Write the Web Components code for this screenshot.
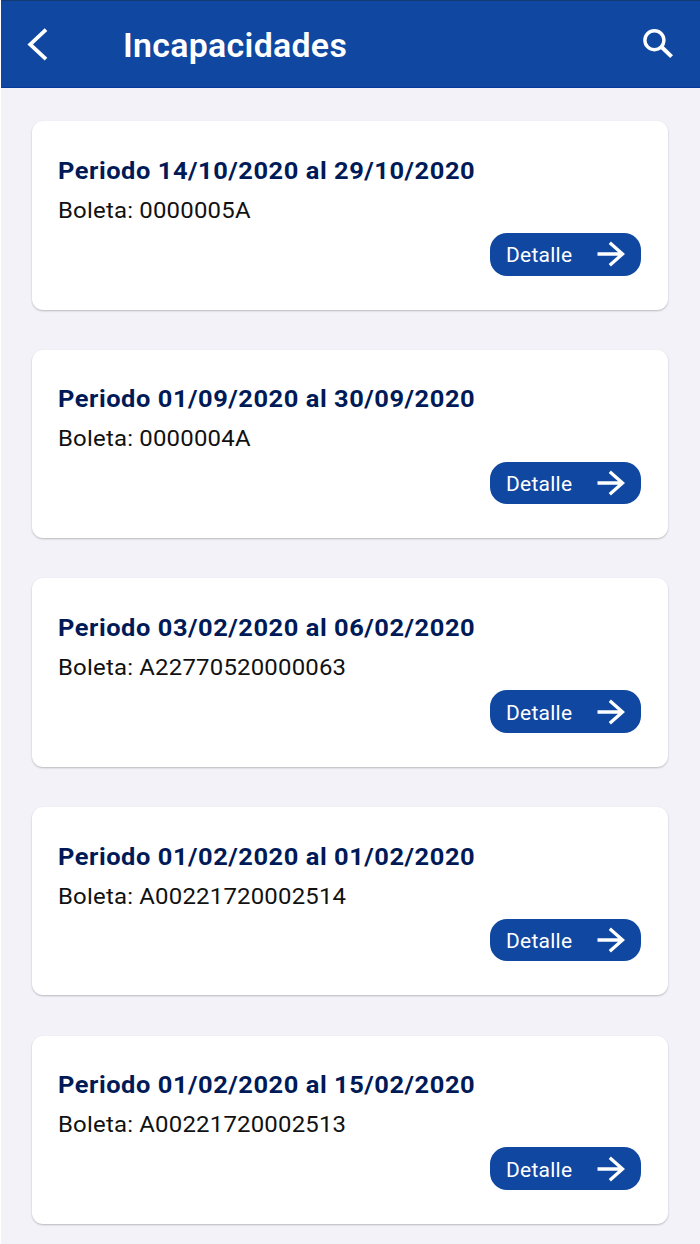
<!DOCTYPE html>
<html lang="es">
<head>
    <meta charset="utf-8">
    <title>Incapacidades</title>
    <style>
        body {
            margin: 0;
            height: 1244px;
            overflow: hidden;
            background: #fff;
            font-family: Roboto, "Liberation Sans", sans-serif;
        }
    </style>
</head>
<body>
    <leave-screen>
        <app-bar slot="header">Incapacidades</app-bar>
        <leave-card from="14/10/2020" to="29/10/2020" ticket="0000005A"></leave-card>
        <leave-card from="01/09/2020" to="30/09/2020" ticket="0000004A"></leave-card>
        <leave-card from="03/02/2020" to="06/02/2020" ticket="A22770520000063"></leave-card>
        <leave-card from="01/02/2020" to="01/02/2020" ticket="A00221720002514"></leave-card>
        <leave-card from="01/02/2020" to="15/02/2020" ticket="A00221720002513"></leave-card>
    </leave-screen>

    <script>
        class LeaveScreen extends HTMLElement {
            constructor() {
                super();
                this.attachShadow({ mode: 'open' });
                this.shadowRoot.innerHTML = `
                    <style>
                        :host {
                            display: block;
                            box-sizing: border-box;
                            height: 1244px;
                            margin-left: 1px;
                            background: #f2f2f8;
                        }
                        main {
                            display: flex;
                            flex-direction: column;
                            gap: 40.3px;
                            padding: 33.1px 32.5px 0 31.4px;
                        }
                    </style>
                    <slot name="header"></slot>
                    <main><slot></slot></main>
                `;
            }
        }

        class AppBar extends HTMLElement {
            constructor() {
                super();
                this.attachShadow({ mode: 'open' });
                this.shadowRoot.innerHTML = `
                    <style>
                        :host {
                            display: flex;
                            align-items: center;
                            box-sizing: border-box;
                            height: 88.2px;
                            padding: 0 27px 0 25px;
                            background: #0f47a1;
                            border-top: 1px solid #153a73;
                            border-bottom: 1px solid #07399a;
                            color: #fff;
                        }
                        h1 {
                            flex: 1;
                            margin: 4px 0 0 74.5px;
                            font-size: 33px;
                            font-weight: 600;
                            line-height: 40px;
                            letter-spacing: 0.3px;
                            transform: scaleX(1.026);
                            transform-origin: 0 50%;
                        }
                        svg {
                            display: block;
                            fill: none;
                            stroke: #fff;
                        }
                    </style>
                    <svg width="22" height="34" viewBox="0 0 22 34" stroke-width="3.8">
                        <path d="M20 2.6 4.2 17.4 20 32.2"/>
                    </svg>
                    <h1><slot></slot></h1>
                    <svg width="30" height="30" viewBox="0 0 30 30">
                        <circle cx="11.4" cy="11.2" r="9.5" stroke-width="3.4"/>
                        <path d="m18.6 18 10 9.6" stroke-width="4"/>
                    </svg>
                `;
            }
        }

        class DetailButton extends HTMLElement {
            constructor() {
                super();
                this.attachShadow({ mode: 'open' });
                this.shadowRoot.innerHTML = `
                    <style>
                        :host {
                            display: block;
                        }
                        button {
                            display: flex;
                            align-items: center;
                            justify-content: space-between;
                            box-sizing: border-box;
                            width: 151px;
                            height: 42.5px;
                            padding: 0 16px;
                            border: 0;
                            border-radius: 17px;
                            background: #0f47a1;
                            color: #fff;
                            font: 400 21px/28px Roboto, "Liberation Sans", sans-serif;
                            letter-spacing: 0.25px;
                        }
                        span {
                            margin-top: 2px;
                        }
                        svg {
                            fill: none;
                            stroke: #fff;
                            stroke-width: 3.3;
                        }
                    </style>
                    <button type="button">
                        <span><slot></slot></span>
                        <svg width="28" height="26" viewBox="0 0 28 26">
                            <path d="M0.5 13h25M12.8 1.8 25.5 13 12.8 24.2"/>
                        </svg>
                    </button>
                `;
            }
        }

        class LeaveCard extends HTMLElement {
            constructor() {
                super();
                this.attachShadow({ mode: 'open' });
                this.shadowRoot.innerHTML = `
                    <style>
                        :host {
                            display: flex;
                            flex-direction: column;
                            box-sizing: border-box;
                            height: 188.3px;
                            padding: 33.5px 26.5px 0 25.4px;
                            border-radius: 11px;
                            background: #fff;
                            box-shadow: 0 1px 2px rgba(0, 0, 0, 0.24);
                        }
                        /* Wide lettering: Roboto stretched sideways from its left edge. */
                        h2, p {
                            align-self: flex-start;
                            margin: 0;
                            line-height: 32px;
                            white-space: nowrap;
                            transform-origin: 0 50%;
                        }
                        h2 {
                            color: #001a57;
                            font-size: 23.5px;
                            font-weight: 700;
                            letter-spacing: 0.5px;
                            transform: scaleX(1.083);
                        }
                        p {
                            margin-top: 7px;
                            color: #111;
                            font-size: 22.5px;
                            font-weight: 400;
                            letter-spacing: 0.2px;
                            transform: scaleX(1.063);
                        }
                        detail-button {
                            align-self: flex-end;
                            margin-top: 7.3px;
                        }
                    </style>
                    <h2></h2>
                    <p></p>
                    <detail-button>Detalle</detail-button>
                `;
            }

            connectedCallback() {
                const from = this.getAttribute('from');
                const to = this.getAttribute('to');
                this.shadowRoot.querySelector('h2').textContent = `Periodo ${from} al ${to}`;
                this.shadowRoot.querySelector('p').textContent = `Boleta: ${this.getAttribute('ticket')}`;
            }
        }

        customElements.define('leave-screen', LeaveScreen);
        customElements.define('app-bar', AppBar);
        customElements.define('detail-button', DetailButton);
        customElements.define('leave-card', LeaveCard);
    </script>
</body>
</html>
